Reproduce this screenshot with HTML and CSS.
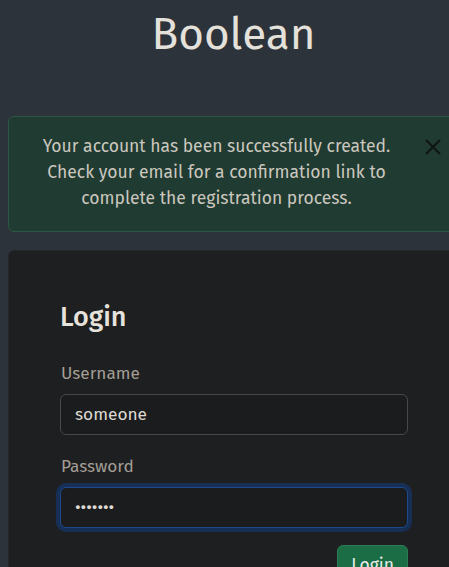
FILE: index.html
```html
<!DOCTYPE html>
<html lang="en">
<head>
<meta charset="utf-8">
<title>Boolean</title>
<link rel="stylesheet" href="styles.css">
</head>
<body>
<div class="page">
  <h1 class="brand">Boolean</h1>
  <div class="alert" role="alert">
    <p class="alert-text">Your account has been successfully created. Check your email for a confirmation link to complete the registration process.</p>
    <button class="alert-close" type="button" aria-label="Close">
      <svg width="16" height="16" viewBox="0 0 16 16"><path d="M1 1L15 15M15 1L1 15" stroke="currentColor" stroke-width="2" fill="none"/></svg>
    </button>
  </div>
  <div class="card">
    <form class="login-form">
      <h2 class="card-title">Login</h2>
      <label class="field-label" for="username">Username</label>
      <input class="field" id="username" type="text" value="someone">
      <label class="field-label field-label-gap" for="password">Password</label>
      <input class="field field-focus" id="password" type="password" value="1234567">
      <div class="actions">
        <button class="btn-login" type="button">Login</button>
      </div>
    </form>
  </div>
</div>
</body>
</html>
```

FILE: styles.css
```css
html {
  overflow: hidden;
}
body {
  margin: 0;
  background: #2d333a;
  font-family: "Fira Sans", "Open Sans", "Noto Sans", sans-serif;
  font-size: 17.5px;
  color: #d8d4cc;
}
.page {
  width: 451px;
  padding: 8px 0 0 8px;
}
.brand {
  margin: 0;
  text-align: center;
  font-size: 44px;
  font-weight: 400;
  line-height: 54px;
  color: #e4e0da;
}
.alert {
  position: relative;
  margin-top: 54px;
  background: #203b31;
  border: 1px solid #2b5643;
  border-radius: 6px;
  padding: 17px 50px 19px 16px;
}
.alert-text {
  margin: 0;
  text-align: center;
  font-size: 17.5px;
  line-height: 26px;
  color: #cbc7bf;
}
.alert-close {
  position: absolute;
  top: 22px;
  right: 17px;
  width: 16px;
  height: 16px;
  padding: 0;
  border: 0;
  background: none;
  color: #0f1512;
  display: flex;
}
.card {
  margin-top: 18px;
  background: #1e1f21;
  border: 1px solid #25272a;
  border-radius: 6px;
  padding: 49px 51px 40px;
  min-height: 400px;
}
.login-form {
  width: 348px;
  display: flex;
  flex-direction: column;
}
.card-title {
  margin: 0 0 26px 0;
  font-size: 27px;
  font-weight: 500;
  line-height: 34px;
  color: #e6e2dc;
}
.field-label {
  margin: 0 0 7px 1px;
  font-size: 17.2px;
  line-height: 27px;
  color: #a39e95;
}
.field-label-gap {
  margin-top: 18px;
}
.field {
  box-sizing: border-box;
  height: 41px;
  width: 348px;
  background: #1b1c1e;
  border: 1px solid #46484c;
  border-radius: 6px;
  padding: 0 14px;
  font-family: inherit;
  font-size: 17.3px;
  color: #dedad3;
  outline: none;
}
.field-focus {
  border-color: #1d4a8c;
  box-shadow: 0 0 0 4px #172f55;
}
.actions {
  display: flex;
  justify-content: flex-end;
  margin-top: 17px;
}
.btn-login {
  background: #1a6d44;
  border: 1px solid #2a7d53;
  border-radius: 6px;
  color: #e8ece9;
  font-family: inherit;
  font-size: 17.5px;
  line-height: 27px;
  padding: 6px 13px;
}
```
